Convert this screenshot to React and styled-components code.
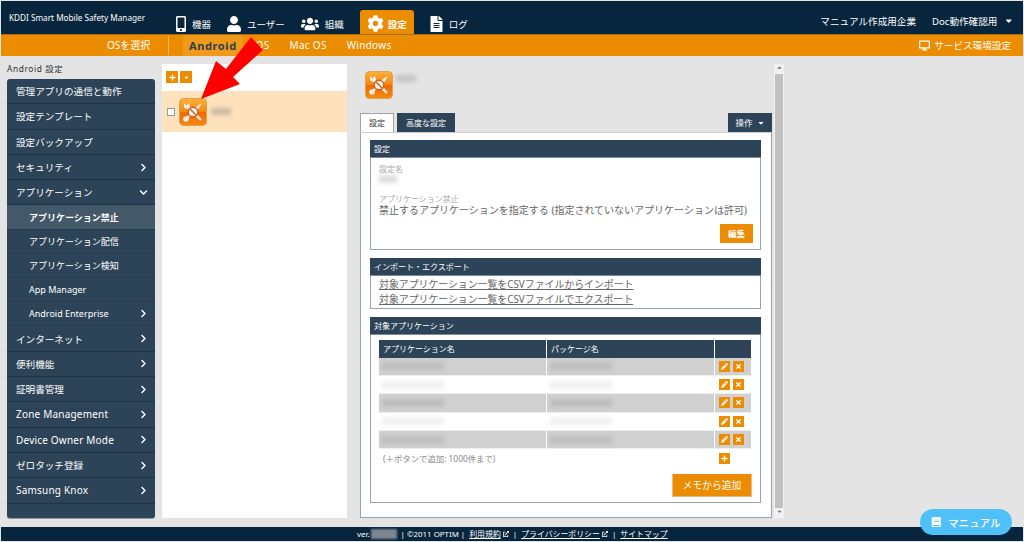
import React from "react"
import styled, { createGlobalStyle } from "styled-components"
import {
  FaMobileAlt, FaUser, FaUsers, FaCog, FaFileAlt, FaDesktop, FaCaretDown, FaCaretUp,
  FaPlus, FaTimes, FaPencilAlt, FaChevronRight, FaChevronDown, FaBook, FaExternalLinkAlt
} from "react-icons/fa"

const NAVY = "#07253c"
const SLATE = "#2d4358"
const ORANGE = "#ec8c00"
const FONT = `"Noto Sans", "Noto Sans CJK JP", sans-serif`

const GlobalStyle = createGlobalStyle`
  html, body { margin: 0; padding: 0; height: 100%; overflow: hidden; }
  body { font-family: ${FONT}; background: #e4e4e4; }
  * { box-sizing: border-box; }
`

const Page = styled.div`
  position: relative;
  height: 542px;
  padding: 1px;
  display: flex;
  flex-direction: column;
  background: #e4e4e4;
`

const Header = styled.header`
  flex: 0 0 34px;
  background: ${NAVY};
  display: flex;
  color: #fff;
  border-bottom: 1px solid #a86a10;
`
const Brand = styled.div`
  flex: 0 0 167px;
  padding: 10px 0 0 8px;
  font-size: 8.2px;
  line-height: 14px;
  white-space: nowrap;
`
const Nav = styled.nav`
  display: flex;
  align-items: flex-end;
`
const NavItem = styled.a`
  height: 24px;
  margin: ${p => (p.$active ? "0 8px" : "0")};
  padding: 3px ${p => (p.$active ? 7 : 8)}px 0;
  display: flex;
  align-items: center;
  gap: ${p => (p.$active ? 4 : 6)}px;
  font-size: 9.5px;
  background: ${p => (p.$active ? ORANGE : "transparent")};
  border-radius: 3px 3px 0 0;
  font-weight: ${p => (p.$active ? 700 : 400)};
  svg { width: ${p => p.$w}px; height: ${p => p.$h || 16}px; }
`
const Account = styled.div`
  margin-left: auto;
  padding: 14px 9px 0 0;
  display: flex;
  gap: 16px;
  font-size: 9.6px;
  line-height: 14px;
  svg { margin-left: 7px; vertical-align: -1px; }
`

const SubBar = styled.div`
  flex: 0 0 21px;
  background: ${ORANGE};
  display: flex;
  align-items: stretch;
  color: #fff;
  font-size: 10px;
`
const OsLabel = styled.div`
  flex: 0 0 168px;
  padding-left: 106px;
  border-right: 1px solid #f3b968;
  line-height: 19px;
  margin: 1px 0;
`
const OsTabs = styled.div`
  display: flex;
  padding-left: 14px;
  gap: 20px;
`
const OsTab = styled.a`
  line-height: 21px;
  padding: 0 ${p => (p.$active ? "6px" : "0")};
  font-weight: ${p => (p.$active ? 700 : 400)};
  font-size: ${p => (p.$active ? 11 : 10)}px;
  color: ${p => (p.$active ? "#2f3f4d" : "#fff")};
  background: ${p => (p.$active ? "#f09a1c" : "transparent")};
  letter-spacing: ${p => (p.$active ? "0.6px" : "0.3px")};
  margin-right: ${p => (p.$active ? "-10px" : "0")};
`
const ServiceLink = styled.a`
  margin-left: auto;
  padding-right: 12px;
  line-height: 21px;
  display: flex;
  align-items: center;
  gap: 4px;
  font-size: 9.6px;
  svg { font-size: 11px; }
`

const Main = styled.main`
  flex: 1;
  min-height: 0;
  display: flex;
  padding: 8px 0 9px 6px;
`
const LeftCol = styled.div`
  flex: 0 0 148px;
  display: flex;
  flex-direction: column;
`
const SideTitle = styled.div`
  font-size: 8.4px;
  line-height: 10px;
  height: 15px;
  color: #333;
  letter-spacing: 0.6px;
`
const Sidebar = styled.ul`
  flex: 1;
  margin: 0;
  padding: 0;
  list-style: none;
  background: ${SLATE};
  border-radius: 3px;
  box-shadow: 0 1px 0 #999;
  color: #fff;
`
const SideRow = styled.li`
  height: ${p => (p.$sub ? 24.2 : 25.3)}px;
  padding-left: ${p => (p.$sub ? 22 : 9)}px;
  padding-right: 7px;
  display: flex;
  align-items: center;
  justify-content: space-between;
  font-size: ${p => (p.$sub ? 9 : p.$latin ? 10 : 9.6)}px;
  font-weight: ${p => (p.$active ? 700 : 400)};
  letter-spacing: ${p => (p.$latin && !p.$sub ? "0.2px" : "0")};
  background: ${p => (p.$active ? "#435868" : "transparent")};
  border-bottom: 1px solid ${p => (p.$sub ? "#253a4e" : "#1c3348")};
  svg { font-size: 9px; }
`

const ListCol = styled.section`
  flex: 0 0 185px;
  margin-left: 7px;
  background: #fff;
`
const ListTools = styled.div`
  height: 27px;
  padding: 7px 0 0 4px;
  display: flex;
  gap: 2px;
`
const SquareBtn = styled.span`
  width: ${p => p.$size || 11}px;
  height: ${p => p.$size || 11}px;
  background: ${ORANGE};
  color: #fff;
  display: inline-flex;
  align-items: center;
  justify-content: center;
  font-size: 7px;
`
const ListRow = styled.div`
  height: 41px;
  background: #fde2bd;
  display: flex;
  align-items: center;
  padding-left: 5px;
  gap: 4px;
`
const Check = styled.span`
  width: 8px;
  height: 8px;
  background: #fff;
  border: 1px solid #999;
`
const Blur = styled.span`
  display: inline-block;
  flex: none;
  width: ${p => p.$w || 20}px;
  height: ${p => p.$h || 7}px;
  background: ${p => p.$c || "#cbb9a0"};
  filter: blur(2px);
`
const NameBlur = styled(Blur)`
  margin-top: 1px;
`

const DetailCol = styled.section`
  flex: 0 0 437px;
  display: flex;
  padding-left: 13px;
`
const DetailInner = styled.div`
  flex: 0 0 412px;
  min-width: 0;
  display: flex;
  flex-direction: column;
`
const TitleRow = styled.div`
  height: 49px;
  padding: 7px 0 0 5px;
  display: flex;
  gap: 3px;
  span { margin-top: 4px; }
`
const TabRow = styled.div`
  height: 19px;
  display: flex;
  gap: 3px;
  align-items: flex-end;
`
const Tab = styled.a`
  height: 19px;
  padding: 0 8px;
  font-size: 8px;
  line-height: 18px;
  background: ${p => (p.$active ? "#fff" : SLATE)};
  color: ${p => (p.$active ? "#333" : "#fff")};
  border: 1px solid ${p => (p.$active ? "#9aa3ab" : SLATE)};
  border-bottom: none;
`
const OpsBtn = styled.a`
  margin-left: auto;
  width: 44px;
  height: 19px;
  background: ${SLATE};
  color: #fff;
  font-size: 8.5px;
  line-height: 19px;
  text-align: center;
  svg { margin-left: 4px; vertical-align: -1px; font-size: 8px; }
`
const Panel = styled.div`
  flex: 1;
  min-height: 0;
  background: #fff;
  border: 1px solid #9aa3ab;
  border-top-color: #ccc;
  padding: 7px 10px 0 9px;
  display: flex;
  flex-direction: column;
  gap: 8px;
`
const Section = styled.div`
  flex: 0 0 ${p => p.$h}px;
  border: 1px solid #9aa3ab;
  border-top: none;
  display: flex;
  flex-direction: column;
`
const SectionHead = styled.div`
  flex: 0 0 18px;
  margin: 0 -1px;
  background: ${SLATE};
  border-bottom: 1px solid #7d8b98;
  color: #fff;
  font-size: 8px;
  line-height: 17px;
  padding-left: 4px;
`
const SectionBody = styled.div`
  flex: 1;
  padding: ${p => p.$pad || "5px 8px"};
  display: flex;
  flex-direction: column;
  min-height: 0;
`
const FieldLabel = styled.div`
  font-size: 8px;
  line-height: 11px;
  color: #aaa;
  margin-top: ${p => p.$top || 0}px;
`
const FieldValue = styled.div`
  font-size: 10px;
  line-height: 12px;
  color: #666;
  white-space: nowrap;
`
const EditBtn = styled.a`
  align-self: flex-end;
  margin: 8px -1px 0 0;
  width: 33px;
  height: 19px;
  background: ${ORANGE};
  color: #fff;
  font-size: 8.5px;
  font-weight: 700;
  line-height: 19px;
  text-align: center;
`
const CsvLink = styled.a`
  display: block;
  font-size: 9.9px;
  line-height: 14.5px;
  color: #666;
  text-decoration: underline;
  white-space: nowrap;
`

const Grid = styled.div`
  display: grid;
  grid-template-columns: 168px 168px 37px;
  grid-template-rows: 17.5px;
  grid-auto-rows: 18.4px;
`
const HeadCell = styled.div`
  background: ${SLATE};
  color: #fff;
  font-size: 8px;
  line-height: 17px;
  padding-left: 4px;
  border-right: 1px solid #fff;
  white-space: nowrap;
`
const Cell = styled.div`
  background: ${p => (p.$odd ? "#d0d0d0" : "#fff")};
  border-right: 1px solid #fff;
  border-bottom: 1px solid #eee;
  display: flex;
  align-items: center;
  padding-left: ${p => p.$pad ?? 3}px;
  gap: 3px;
`
const NoteRow = styled.div`
  display: flex;
  align-items: center;
  justify-content: space-between;
  height: 18px;
  padding: 0 22px 0 4px;
  font-size: 8.4px;
  color: #888;
`
const MemoBtn = styled.a`
  align-self: flex-end;
  margin-top: 7px;
  width: 80px;
  height: 23px;
  background: ${ORANGE};
  color: #fff;
  font-size: 9.8px;
  line-height: 23px;
  text-align: center;
  border: 1px solid #f4b97a;
  border-width: 0 1px 1px 1px;
`

const Scrollbar = styled.div`
  flex: 0 0 10px;
  margin-left: 2px;
  background: #f1f1f1;
  display: flex;
  flex-direction: column;
  align-items: stretch;
  font-size: 7px;
  color: #777;
  text-align: center;
`
const ScrollArrow = styled.div`
  height: 10px;
  line-height: 10px;
`
const ScrollThumb = styled.div`
  flex: 1;
  background: #c1c1c1;
  margin: 0 1px;
`

const Footer = styled.footer`
  flex: 0 0 14px;
  background: ${NAVY};
  color: #fff;
  font-size: 7.9px;
  line-height: 14px;
  display: flex;
  padding-left: 356px;
  gap: 4px;
  white-space: nowrap;
`
const FooterLink = styled.a`
  text-decoration: underline;
`
const ExtIcon = styled(FaExternalLinkAlt)`
  font-size: 6px;
  margin: 4px 0 0 -2px;
`
const Version = styled.span`
  display: inline-block;
  width: 26px;
  height: 10px;
  margin: 2px 0 0 -3px;
  background: #7c8590;
  filter: blur(1px);
`
const ManualBtn = styled.a`
  position: absolute;
  left: 920px;
  top: 509px;
  width: 92px;
  height: 26px;
  border-radius: 13px;
  background: #4fc0f8;
  color: #fff;
  font-size: 10.6px;
  font-weight: 500;
  display: flex;
  align-items: center;
  justify-content: center;
  gap: 6px;
`
const ArrowOverlay = styled.svg`
  position: absolute;
  left: 0;
  top: 0;
  pointer-events: none;
`

const AppIcon = () => (
  <svg width={28} height={28} viewBox="0 0 28 28">
    <defs>
      <linearGradient id="appg" x1="0" y1="0" x2="0" y2="1">
        <stop offset="0" stopColor="#fbb03a" />
        <stop offset="0.48" stopColor="#f58a12" />
        <stop offset="0.52" stopColor="#ee6a00" />
        <stop offset="1" stopColor="#f58a10" />
      </linearGradient>
    </defs>
    <rect x="0.5" y="0.5" width="27" height="27" rx="4" fill="url(#appg)" stroke="#e0a050" />
    {/* wrench, top-left to bottom-right */}
    <path d="M8 8 L21 21" stroke="#e6e6e6" strokeWidth="2.6" />
    <path d="M5 5 L5 9 Q6 11 9 11 L11 9 Q11 6 9 5 L8 8 Z" fill="#f2f2f2" />
    <path d="M19 19 L23 21 L21 23 Z" fill="#ddd" />
    {/* screwdriver, top-right to bottom-left */}
    <path d="M23 5 L18 8 L16 11 L18 12.5 L20 10 Z" fill="#f2f2f2" />
    <path d="M17 11 L8 20" stroke="#e6e6e6" strokeWidth="2.4" />
    <circle cx="7" cy="21" r="2.8" fill="#e9e9e9" />
    <circle cx="14" cy="14" r="4.8" fill="#f7f7f7" stroke="#dd5a10" strokeWidth="1.4" />
    <path d="M10.8 10.8 L17.2 17.2" stroke="#dd5a10" strokeWidth="1.4" />
  </svg>
)

const sideItems = [
  { t: "管理アプリの通信と動作" },
  { t: "設定テンプレート" },
  { t: "設定バックアップ" },
  { t: "セキュリティ", more: true },
  { t: "アプリケーション", open: true },
  { t: "アプリケーション禁止", sub: true, active: true },
  { t: "アプリケーション配信", sub: true },
  { t: "アプリケーション検知", sub: true },
  { t: "App Manager", sub: true, latin: true },
  { t: "Android Enterprise", sub: true, latin: true, more: true },
  { t: "インターネット", more: true },
  { t: "便利機能", more: true },
  { t: "証明書管理", more: true },
  { t: "Zone Management", latin: true, more: true },
  { t: "Device Owner Mode", latin: true, more: true },
  { t: "ゼロタッチ登録", more: true },
  { t: "Samsung Knox", latin: true, more: true }
]

const rows = [0, 1, 2, 3, 4]

export default function App() {
  return (
    <Page>
      <GlobalStyle />
      <Header>
        <Brand>KDDI Smart Mobile Safety Manager</Brand>
        <Nav>
          <NavItem $w={10}><FaMobileAlt />機器</NavItem>
          <NavItem $w={14}><FaUser />ユーザー</NavItem>
          <NavItem $w={18}><FaUsers />組織</NavItem>
          <NavItem $w={17} $h={17} $active><FaCog />設定</NavItem>
          <NavItem $w={13}><FaFileAlt />ログ</NavItem>
        </Nav>
        <Account>
          <span>マニュアル作成用企業</span>
          <span>Doc動作確認用<FaCaretDown /></span>
        </Account>
      </Header>
      <SubBar>
        <OsLabel>OSを選択</OsLabel>
        <OsTabs>
          <OsTab $active>Android</OsTab>
          <OsTab>iOS</OsTab>
          <OsTab>Mac OS</OsTab>
          <OsTab>Windows</OsTab>
        </OsTabs>
        <ServiceLink><FaDesktop />サービス環境設定</ServiceLink>
      </SubBar>
      <Main>
        <LeftCol>
          <SideTitle>Android 設定</SideTitle>
          <Sidebar>
            {sideItems.map(r => (
              <SideRow key={r.t} $sub={r.sub} $active={r.active} $latin={r.latin}>
                {r.t}
                {r.more && <FaChevronRight />}
                {r.open && <FaChevronDown />}
              </SideRow>
            ))}
          </Sidebar>
        </LeftCol>
        <ListCol>
          <ListTools>
            <SquareBtn $size={12}><FaPlus /></SquareBtn>
            <SquareBtn $size={12}><FaCaretDown /></SquareBtn>
          </ListTools>
          <ListRow>
            <Check />
            <AppIcon />
            <Blur $w={20} />
          </ListRow>
        </ListCol>
        <DetailCol>
          <DetailInner>
            <TitleRow>
              <AppIcon />
              <Blur $w={20} $c="#c4c4c4" />
            </TitleRow>
            <TabRow>
              <Tab $active>設定</Tab>
              <Tab>高度な設定</Tab>
              <OpsBtn>操作<FaCaretDown /></OpsBtn>
            </TabRow>
            <Panel>
              <Section $h={110}>
                <SectionHead>設定</SectionHead>
                <SectionBody>
                  <FieldLabel>設定名</FieldLabel>
                  <NameBlur $w={18} $h={8} $c="#ddd" />
                  <FieldLabel $top={10}>アプリケーション禁止</FieldLabel>
                  <FieldValue>禁止するアプリケーションを指定する (指定されていないアプリケーションは許可)</FieldValue>
                  <EditBtn>編集</EditBtn>
                </SectionBody>
              </Section>
              <Section $h={51}>
                <SectionHead>インポート・エクスポート</SectionHead>
                <SectionBody $pad="1px 8px">
                  <CsvLink>対象アプリケーション一覧をCSVファイルからインポート</CsvLink>
                  <CsvLink>対象アプリケーション一覧をCSVファイルでエクスポート</CsvLink>
                </SectionBody>
              </Section>
              <Section $h={185}>
                <SectionHead>対象アプリケーション</SectionHead>
                <SectionBody $pad="5px 8px">
                  <Grid>
                    <HeadCell>アプリケーション名</HeadCell>
                    <HeadCell>パッケージ名</HeadCell>
                    <HeadCell />
                    {rows.map(i => (
                      <React.Fragment key={i}>
                        <Cell $odd={i % 2 === 0}><Blur $w={62} $h={8} $c={i % 2 === 0 ? "#bdbdbd" : "#f0f0f0"} /></Cell>
                        <Cell $odd={i % 2 === 0}><Blur $w={62} $h={8} $c={i % 2 === 0 ? "#bdbdbd" : "#f0f0f0"} /></Cell>
                        <Cell $odd={i % 2 === 0} $pad={4}>
                          <SquareBtn><FaPencilAlt /></SquareBtn>
                          <SquareBtn><FaTimes /></SquareBtn>
                        </Cell>
                      </React.Fragment>
                    ))}
                  </Grid>
                  <NoteRow>
                    <span>(＋ボタンで追加: 1000件まで)</span>
                    <SquareBtn><FaPlus /></SquareBtn>
                  </NoteRow>
                  <MemoBtn>メモから追加</MemoBtn>
                </SectionBody>
              </Section>
            </Panel>
          </DetailInner>
          <Scrollbar>
            <ScrollArrow><FaCaretUp /></ScrollArrow>
            <ScrollThumb />
            <ScrollArrow><FaCaretDown /></ScrollArrow>
          </Scrollbar>
        </DetailCol>
      </Main>
      <Footer>
        <span>ver.</span><Version />
        <span>| ©2011 OPTIM |</span>
        <FooterLink>利用規約</FooterLink><ExtIcon />
        <span>|</span>
        <FooterLink>プライバシーポリシー</FooterLink><ExtIcon />
        <span>|</span>
        <FooterLink>サイトマップ</FooterLink>
      </Footer>
      <ManualBtn><FaBook />マニュアル</ManualBtn>
      <ArrowOverlay width="1024" height="542" viewBox="0 0 1024 542">
        <polygon points="201,99 216,61 226,69 251,37 263,50 233,77 240,84" fill="#fe0000" />
      </ArrowOverlay>
    </Page>
  )
}
